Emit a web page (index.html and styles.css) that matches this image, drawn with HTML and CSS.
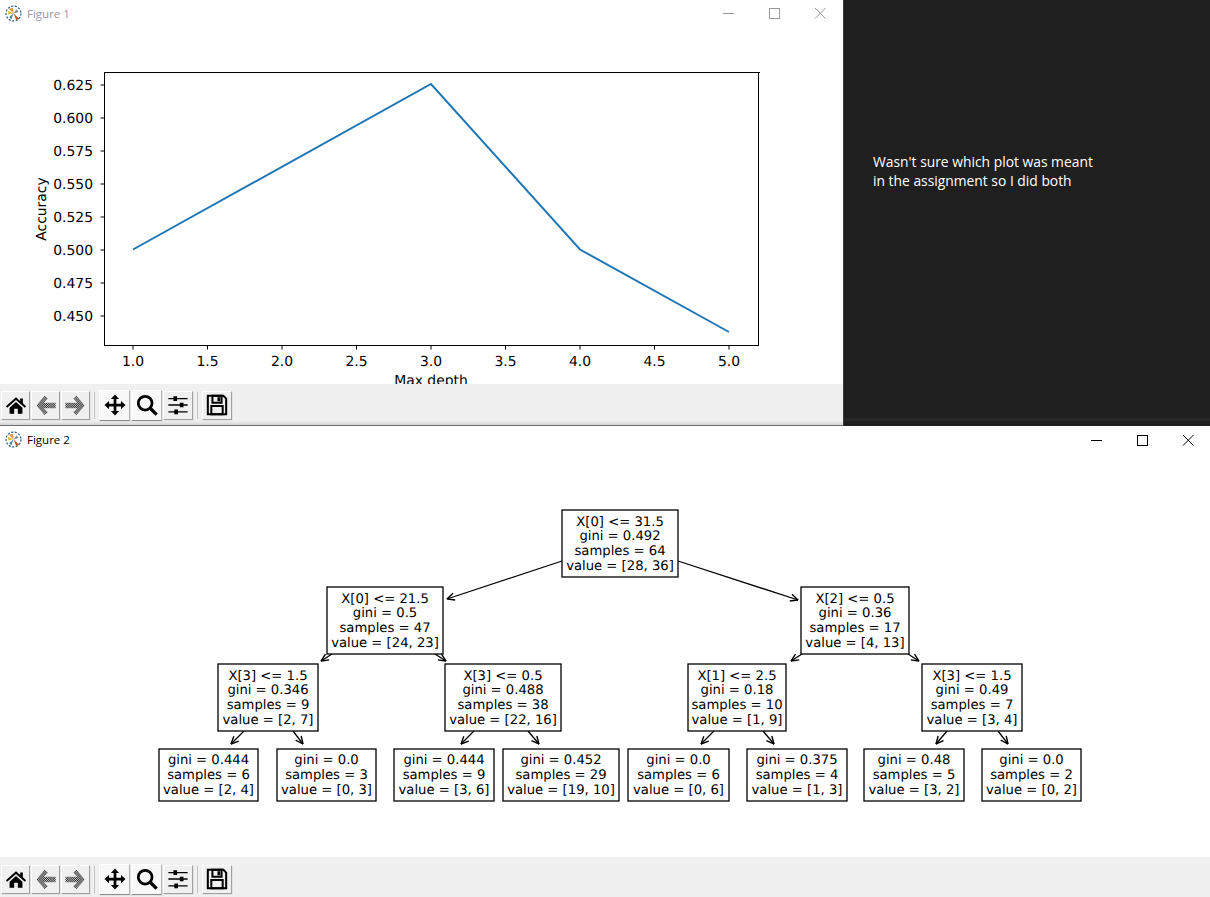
FILE: index.html
```html
<!DOCTYPE html>
<html lang="en">
<head>
    <meta charset="UTF-8">
    <title>Figures</title>
    <link rel="stylesheet" href="styles.css">
</head>
<body>
    <svg class="defs" width="0" height="0">
        <defs>
            <pattern id="dither" width="2" height="2" patternUnits="userSpaceOnUse">
                <rect width="1" height="1" fill="#000"/>
                <rect x="1" y="1" width="1" height="1" fill="#000"/>
            </pattern>
            <marker id="head" viewBox="0 0 9 9" refX="8.500" refY="4.500" markerWidth="9" markerHeight="9" markerUnits="userSpaceOnUse" orient="auto">
                <path d="M1 1 L8.500 4.500 L1 8" fill="none" stroke="#000" stroke-width="1.4"/>
            </marker>
            <symbol id="logo" viewBox="0 0 16 16">
                <circle cx="8" cy="8" r="7" fill="#fff" stroke="#1c5f8c" stroke-width="1.1" stroke-dasharray="2 1.4"/>
                <path d="M8 8 L3.500 3.500 L7.500 2.500 Z" fill="#e8963a"/>
                <path d="M8 8 L3 9 L2.800 5.500 Z" fill="#d8c23f"/>
                <path d="M8 8 L13.500 13 L10.500 14 Z" fill="#b9552a"/>
                <path d="M8 8 L6 13.500 L3.800 11.500 Z" fill="#4f86ad"/>
                <path d="M8 8 L11 4 L12.800 6.500 Z" fill="#7d8c99"/>
            </symbol>
            <symbol id="i-home" viewBox="0 0 24 24">
                <path d="M12 3.500 L16.500 7.500 V5 H19.500 V10.200 L23 13.400 L21.600 15 L12 6.600 L2.400 15 L1 13.400 Z"/>
                <path d="M5 15 L12 8.800 L19 15 V21.500 H14 V16 H10 V21.500 H5 Z"/>
            </symbol>
            <symbol id="i-back" viewBox="0 0 24 24">
                <path d="M1.500 12.500 L10.500 2 L14 5 L9.500 9.500 H22.500 V15.500 H9.500 L14 20 L10.500 23 Z" fill="url(#dither)"/>
            </symbol>
            <symbol id="i-forward" viewBox="0 0 24 24">
                <path d="M21.500 12.500 L12.500 2 L9 5 L13.500 9.500 H0.500 V15.500 H13.500 L9 20 L12.500 23 Z" fill="url(#dither)"/>
            </symbol>
            <symbol id="i-move" viewBox="0 0 24 24">
                <path d="M12 0.500 L16.500 5.500 H13.500 V10.500 H18.500 V7.500 L23.500 12 L18.500 16.500 V13.500 H13.500 V18.500 H16.500 L12 23.500 L7.500 18.500 H10.500 V13.500 H5.500 V16.500 L0.500 12 L5.500 7.500 V10.500 H10.500 V5.500 H7.500 Z"/>
            </symbol>
            <symbol id="i-zoom" viewBox="0 0 24 24">
                <circle cx="10" cy="10" r="7.500" fill="none" stroke="#000" stroke-width="3"/>
                <path d="M15.500 15.500 L22.500 22.500" stroke="#000" stroke-width="3.600" fill="none"/>
            </symbol>
            <symbol id="i-config" viewBox="0 0 24 24">
                <path d="M1.500 5 H22.500 M1.500 12 H22.500 M1.500 19.500 H22.500" stroke="#000" stroke-width="1.500" fill="none"/>
                <path d="M7 2.500 H11 V7.500 H7 Z M14 9.500 H18 V14.500 H14 Z M8 17 H12 V22 H8 Z"/>
            </symbol>
            <symbol id="i-save" viewBox="0 0 24 24">
                <path d="M2 2 H19 L22 5 V22 H2 Z" fill="none" stroke="#000" stroke-width="2.200"/>
                <path d="M7 2 H17 V9.500 H7 Z M5.800 13 H18.200 V22 H5.800 Z" fill="none" stroke="#000" stroke-width="2.200"/>
                <rect x="12.500" y="3.500" width="3" height="4.500"/>
            </symbol>
        </defs>
    </svg>

    <div class="screen">
        <section class="window window-top">
            <header class="titlebar inactive">
                <svg class="app-icon"><use href="#logo"/></svg>
                <span class="title">Figure 1</span>
                <div class="captions">
                    <svg class="caption" viewBox="0 0 46 30"><path d="M18 13.500 H29"/></svg>
                    <svg class="caption" viewBox="0 0 46 30"><rect x="18.500" y="8.500" width="10" height="10"/></svg>
                    <svg class="caption" viewBox="0 0 46 30"><path d="M18 8 L28.500 18.500 M28.500 8 L18 18.500"/></svg>
                </div>
            </header>
            <svg class="canvas canvas-top" viewBox="0 30 843 354">
                <rect class="spine" x="104.500" y="72.500" width="654" height="273"/>
                <path class="tick" d="M758 72.500H760M100.500 85H104M100.500 118H104M100.500 151H104M100.500 184H104M100.500 217H104M100.500 250H104M100.500 283H104M100.500 316H104"/>
                <path class="tick" d="M133 345V349.500M207.500 345V349.500M282 345V349.500M356.500 345V349.500M431 345V349.500M505.500 345V349.500M580 345V349.500M654.500 345V349.500M729 345V349.500"/>
                <polyline class="series" points="133,249.500 431,84 580,249.500 729,332"/>
                <g class="axis-y">
                    <text x="93" y="90">0.625</text>
                    <text x="93" y="123">0.600</text>
                    <text x="93" y="156">0.575</text>
                    <text x="93" y="189">0.550</text>
                    <text x="93" y="222">0.525</text>
                    <text x="93" y="255">0.500</text>
                    <text x="93" y="288">0.475</text>
                    <text x="93" y="321">0.450</text>
                </g>
                <g class="axis-x">
                    <text x="133" y="366">1.0</text>
                    <text x="207.500" y="366">1.5</text>
                    <text x="282" y="366">2.0</text>
                    <text x="356.500" y="366">2.5</text>
                    <text x="431" y="366">3.0</text>
                    <text x="505.500" y="366">3.5</text>
                    <text x="580" y="366">4.0</text>
                    <text x="654.500" y="366">4.5</text>
                    <text x="729" y="366">5.0</text>
                    <text x="431" y="385">Max depth</text>
                    <text x="46" y="209" transform="rotate(-90 46 209)">Accuracy</text>
                </g>
            </svg>
            <nav class="toolbar">
                <button class="tool"><svg><use href="#i-home"/></svg></button>
                <button class="tool"><svg><use href="#i-back"/></svg></button>
                <button class="tool"><svg><use href="#i-forward"/></svg></button>
                <span class="sep"></span>
                <button class="tool check"><svg><use href="#i-move"/></svg></button>
                <button class="tool check"><svg><use href="#i-zoom"/></svg></button>
                <button class="tool config"><svg><use href="#i-config"/></svg></button>
                <span class="sep"></span>
                <button class="tool save"><svg><use href="#i-save"/></svg></button>
            </nav>
        </section>

        <aside class="note">
            <p>Wasn't sure which plot was meant<br>in the assignment so I did both</p>
        </aside>

        <section class="window window-bottom">
            <header class="titlebar">
                <svg class="app-icon"><use href="#logo"/></svg>
                <span class="title">Figure 2</span>
                <div class="captions">
                    <svg class="caption" viewBox="0 0 46 30"><path d="M18 14.500 H29"/></svg>
                    <svg class="caption" viewBox="0 0 46 30"><rect x="18.500" y="9.500" width="10" height="10"/></svg>
                    <svg class="caption" viewBox="0 0 46 30"><path d="M18 9 L28.500 19.500 M28.500 9 L18 19.500"/></svg>
                </div>
            </header>
            <svg class="canvas canvas-bottom" viewBox="0 456 1210 401">
                <g class="edges">
                    <path d="M562 561 L447 599"/>
                    <path d="M678 561 L798 600"/>
                    <path d="M332 654 L321 661"/>
                    <path d="M435 654 L446 661"/>
                    <path d="M802 654 L791 661"/>
                    <path d="M908 654 L919 661"/>
                    <path d="M244 731 L231 744"/>
                    <path d="M293 731 L303 744"/>
                    <path d="M474 731 L461 744"/>
                    <path d="M528 731 L539 744"/>
                    <path d="M714 731 L701 744"/>
                    <path d="M763 731 L774 744"/>
                    <path d="M947 731 L936 744"/>
                    <path d="M998 731 L1008 744"/>
                </g>
                <g class="nodes">
                    <rect x="562" y="510" width="116" height="67"/>
                    <text x="620" y="526">X[0] &lt;= 31.5</text>
                    <text x="620" y="540">gini = 0.492</text>
                    <text x="620" y="555">samples = 64</text>
                    <text x="620" y="570">value = [28, 36]</text>

                    <rect x="327" y="587" width="116" height="67"/>
                    <text x="385" y="603">X[0] &lt;= 21.5</text>
                    <text x="385" y="617">gini = 0.5</text>
                    <text x="385" y="632">samples = 47</text>
                    <text x="385" y="647">value = [24, 23]</text>

                    <rect x="801" y="587" width="108" height="67"/>
                    <text x="855" y="603">X[2] &lt;= 0.5</text>
                    <text x="855" y="617">gini = 0.36</text>
                    <text x="855" y="632">samples = 17</text>
                    <text x="855" y="647">value = [4, 13]</text>

                    <rect x="218" y="664" width="100" height="67"/>
                    <text x="268" y="680">X[3] &lt;= 1.5</text>
                    <text x="268" y="694">gini = 0.346</text>
                    <text x="268" y="709">samples = 9</text>
                    <text x="268" y="724">value = [2, 7]</text>

                    <rect x="445" y="664" width="116" height="67"/>
                    <text x="503" y="680">X[3] &lt;= 0.5</text>
                    <text x="503" y="694">gini = 0.488</text>
                    <text x="503" y="709">samples = 38</text>
                    <text x="503" y="724">value = [22, 16]</text>

                    <rect x="688" y="664" width="98" height="67"/>
                    <text x="737" y="680">X[1] &lt;= 2.5</text>
                    <text x="737" y="694">gini = 0.18</text>
                    <text x="737" y="709">samples = 10</text>
                    <text x="737" y="724">value = [1, 9]</text>

                    <rect x="922" y="664" width="100" height="67"/>
                    <text x="972" y="680">X[3] &lt;= 1.5</text>
                    <text x="972" y="694">gini = 0.49</text>
                    <text x="972" y="709">samples = 7</text>
                    <text x="972" y="724">value = [3, 4]</text>

                    <rect x="159" y="749" width="99" height="52"/>
                    <text x="208.500" y="764">gini = 0.444</text>
                    <text x="208.500" y="779">samples = 6</text>
                    <text x="208.500" y="794">value = [2, 4]</text>

                    <rect x="277" y="749" width="99" height="52"/>
                    <text x="326.500" y="764">gini = 0.0</text>
                    <text x="326.500" y="779">samples = 3</text>
                    <text x="326.500" y="794">value = [0, 3]</text>

                    <rect x="394" y="749" width="100" height="52"/>
                    <text x="444" y="764">gini = 0.444</text>
                    <text x="444" y="779">samples = 9</text>
                    <text x="444" y="794">value = [3, 6]</text>

                    <rect x="503" y="749" width="116" height="52"/>
                    <text x="561" y="764">gini = 0.452</text>
                    <text x="561" y="779">samples = 29</text>
                    <text x="561" y="794">value = [19, 10]</text>

                    <rect x="628" y="749" width="101" height="52"/>
                    <text x="678.500" y="764">gini = 0.0</text>
                    <text x="678.500" y="779">samples = 6</text>
                    <text x="678.500" y="794">value = [0, 6]</text>

                    <rect x="747" y="749" width="100" height="52"/>
                    <text x="797" y="764">gini = 0.375</text>
                    <text x="797" y="779">samples = 4</text>
                    <text x="797" y="794">value = [1, 3]</text>

                    <rect x="864" y="749" width="100" height="52"/>
                    <text x="914" y="764">gini = 0.48</text>
                    <text x="914" y="779">samples = 5</text>
                    <text x="914" y="794">value = [3, 2]</text>

                    <rect x="982" y="749" width="99" height="52"/>
                    <text x="1031.500" y="764">gini = 0.0</text>
                    <text x="1031.500" y="779">samples = 2</text>
                    <text x="1031.500" y="794">value = [0, 2]</text>
                </g>
            </svg>
            <nav class="toolbar">
                <button class="tool"><svg><use href="#i-home"/></svg></button>
                <button class="tool"><svg><use href="#i-back"/></svg></button>
                <button class="tool"><svg><use href="#i-forward"/></svg></button>
                <span class="sep"></span>
                <button class="tool check"><svg><use href="#i-move"/></svg></button>
                <button class="tool check"><svg><use href="#i-zoom"/></svg></button>
                <button class="tool config"><svg><use href="#i-config"/></svg></button>
                <span class="sep"></span>
                <button class="tool save"><svg><use href="#i-save"/></svg></button>
            </nav>
        </section>
    </div>
</body>
</html>
```

FILE: styles.css
```css
body {
    margin: 0;
    background: #fff;
    overflow: hidden;
}
.defs {
    display: block;
    height: 0;
}
.screen {
    width: 1210px;
    height: 897px;
    display: grid;
    grid-template-columns: 843px 1fr;
    grid-template-rows: 426px 471px;
    overflow: hidden;
}
.window {
    display: flex;
    flex-direction: column;
    background: #fff;
    min-width: 0;
}
.window-top {
    height: 426px;
}
.window-bottom {
    grid-column: 1 / 3;
    height: 471px;
}
.titlebar {
    height: 30px;
    flex: none;
    display: flex;
    align-items: center;
    padding-left: 5px;
    font-family: "Open Sans", sans-serif;
    font-size: 11.5px;
    color: #000;
}
.titlebar.inactive {
    color: #9a93a8;
}
.app-icon {
    width: 17px;
    height: 17px;
    margin-right: 5px;
    margin-top: -4px;
}
.title {
    margin-top: -3px;
}
.captions {
    margin-left: auto;
    display: flex;
}
.window-bottom .captions {
    margin-right: -1px;
}
.caption {
    width: 46px;
    height: 30px;
    fill: none;
    stroke: #000;
    stroke-width: 1;
}
.inactive .caption {
    stroke: #999;
}
.canvas {
    display: block;
    flex: none;
}
.canvas-top {
    width: 843px;
    height: 354px;
}
.canvas-bottom {
    width: 1210px;
    height: 401px;
}
.spine {
    fill: #fff;
    stroke: #000;
    stroke-width: 1;
}
.tick {
    stroke: #000;
    stroke-width: 1;
    fill: none;
}
.series {
    fill: none;
    stroke: #1f77b4;
    stroke-width: 2;
}
.axis-y text, .axis-x text {
    font-family: "DejaVu Sans", sans-serif;
    font-size: 13.9px;
    fill: #000;
    text-rendering: geometricPrecision;
}
.axis-y text {
    text-anchor: end;
}
.axis-x text {
    text-anchor: middle;
}
.edges path {
    fill: none;
    stroke: #000;
    stroke-width: 1.3;
    marker-end: url(#head);
}
.nodes rect {
    fill: #fff;
    stroke: #000;
    stroke-width: 1.3;
}
.nodes text {
    font-family: "DejaVu Sans", sans-serif;
    font-size: 13.2px;
    text-anchor: middle;
    fill: #000;
    text-rendering: geometricPrecision;
}
.toolbar {
    flex: 1;
    display: flex;
    align-items: center;
    gap: 1px;
    padding-left: 1px;
    background: linear-gradient(#f0f0f0 88%, #d6d6d6 97%, #6e6e6e 97%);
}
.window-bottom .toolbar {
    padding-top: 4px;
    background: #f0f0f0;
}
.tool {
    width: 29px;
    height: 29px;
    padding: 0;
    display: flex;
    align-items: center;
    justify-content: center;
    background: #f0f0f0;
    border: 1px solid;
    border-color: #fff #a0a0a0 #a0a0a0 #fff;
    box-shadow: 1px 1px 0 #e3e3e3;
}
.tool svg {
    width: 22px;
    height: 22px;
    fill: #000;
}
.tool.check {
    width: 31px;
    height: 31px;
    background: #f8f8f8;
    border-color: #fff #b5b5b5 #8c8c8c #fff;
}
.tool.config {
    width: 30px;
}
.sep {
    width: 1px;
    height: 27px;
    margin: 0 3px;
    background: #c4c4c4;
}
.save {
    width: 30px;
}
.note {
    background: linear-gradient(#1f1f1f 418px, #272727 418px, #272727 421px, #1f1f1f 421px);
    border-left: 1px solid #3c3c3c;
    color: #fff;
    font-family: "Open Sans", sans-serif;
    font-size: 13.85px;
    line-height: 19px;
    padding: 152px 0 0 29px;
    box-sizing: border-box;
}
.note p {
    margin: 0;
}
```
